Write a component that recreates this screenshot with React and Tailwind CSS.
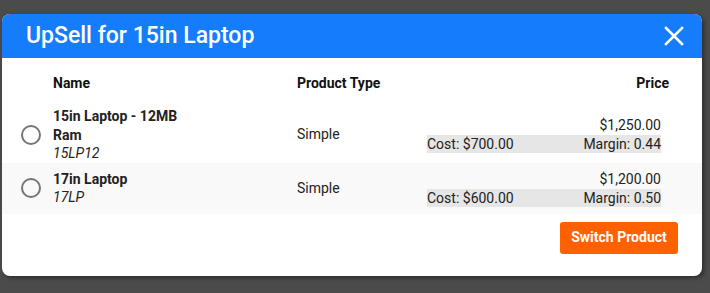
import React from 'react'

const products = [
  { id: 1, name: "15in Laptop - 12MB Ram", sku: "15LP12", type: "Simple", price: "$1,250.00", cost: "$700.00", margin: "0.44" },
  { id: 2, name: "17in Laptop", sku: "17LP", type: "Simple", price: "$1,200.00", cost: "$600.00", margin: "0.50" },
]

const App = () => {
  return (
    <div className="w-full h-[293px] bg-[#4b4b4b] pt-[14px] pl-[2px] font-['Roboto',sans-serif]">
      <div className="w-[700px] h-[262px] bg-white rounded-[8px] overflow-hidden shadow-[2px_2px_4px_rgba(0,0,0,0.4)] flex flex-col">
        <div className="h-[44px] bg-[#157dfc] flex items-center justify-between pl-[24px] pr-[18px]">
          <div className="text-white text-[23px] font-medium">UpSell for 15in Laptop</div>
          <svg width="20" height="20" viewBox="0 0 20 20" className="text-white">
            <path d="M2 2 L18 18 M18 2 L2 18" stroke="currentColor" strokeWidth="2.6" strokeLinecap="square" />
          </svg>
        </div>

        <div className="flex items-center h-[42px] pt-[8px] text-[14px] font-bold text-[#111]">
          <div className="w-[51px]"></div>
          <div className="w-[244px]">Name</div>
          <div className="flex-1">Product Type</div>
          <div className="pr-[33px]">Price</div>
        </div>

        {products.map((obj, index) => (
          <div key={obj.id} className={`flex items-center text-[14px] text-[#222] ${index % 2 ? 'bg-[#f9f9f9] py-[7px]' : 'bg-white pt-[7px]'}`}>
            <div className="w-[51px] flex justify-center pl-[6px]">
              <div className="w-[20px] h-[20px] rounded-full border-2 border-[#757575]"></div>
            </div>
            <div className="w-[244px] leading-[18.5px]">
              <div className="font-bold w-[140px]">{obj.name}</div>
              <div className="italic">{obj.sku}</div>
            </div>
            <div className="w-[130px]">{obj.type}</div>
            <div className="w-[234px] leading-[18px]">
              <div className="text-right">{obj.price}</div>
              <div className="flex justify-between bg-[#e6e6e6] mt-[1px]">
                <span>Cost: {obj.cost}</span>
                <span>Margin: {obj.margin}</span>
              </div>
            </div>
          </div>
        ))}

        <div className="flex justify-end pr-[24px] pt-[8px]">
          <button className="w-[118px] h-[32px] rounded-[3px] bg-[#ff6000] text-white text-[14px] font-bold">Switch Product</button>
        </div>
      </div>
    </div>
  )
}

export default App
